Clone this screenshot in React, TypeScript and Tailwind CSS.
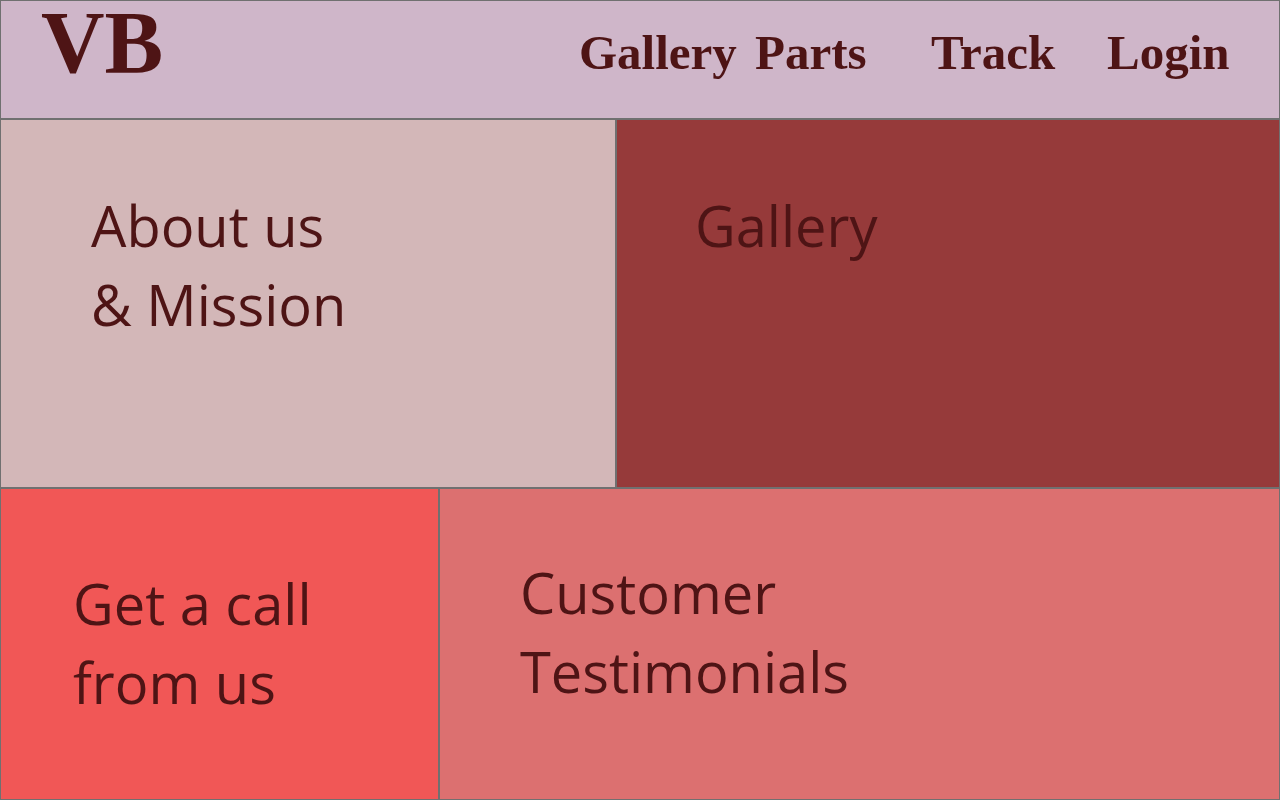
const links = ["Gallery", "Parts", "Track", "Login"];

type TileProps = { lines: string[]; className: string };

function Tile({ lines, className }: TileProps) {
  return (
    <section className={`border border-[#707070] ${className}`}>
      <h2 className="text-[56px] leading-[79px]">
        {lines.map((line) => (
          <span key={line} className="block whitespace-nowrap">
            {line}
          </span>
        ))}
      </h2>
    </section>
  );
}

export default function App() {
  return (
    <div className="flex min-h-screen flex-col bg-white font-['Segoe_UI','Open_Sans','Noto_Sans',sans-serif] text-[#4e1415]">
      <header className="flex items-start justify-between border border-[#707070] bg-[#cfb6c9] pr-12 pb-[33px] pl-10 font-['Old_English_Text_MT','Liberation_Serif',serif] font-bold">
        <a href="#home" className="text-[88px] leading-[84px]">
          VB
        </a>
        <nav className="grid grid-cols-[176px_176px_176px_124px] pt-5">
          {links.map((label) => (
            <a key={label} href={`#${label.toLowerCase()}`} className="text-[49px] leading-[64px]">
              {label}
            </a>
          ))}
        </nav>
      </header>
      <main className="grid flex-1 grid-rows-[369fr_312fr]">
        <div className="grid grid-cols-[616fr_664fr]">
          <Tile lines={["About us", "& Mission"]} className="bg-[#d3b7b8] pt-[66px] pl-[90px]" />
          <Tile lines={["Gallery"]} className="bg-[#963a3a] pt-[66px] pl-[78px]" />
        </div>
        <div className="grid grid-cols-[439fr_841fr]">
          <Tile lines={["Get a call", "from us"]} className="bg-[#f15756] pt-[75px] pl-[72px]" />
          <Tile lines={["Customer", "Testimonials"]} className="bg-[#dc7070] pt-[64px] pl-[80px]" />
        </div>
      </main>
    </div>
  );
}
